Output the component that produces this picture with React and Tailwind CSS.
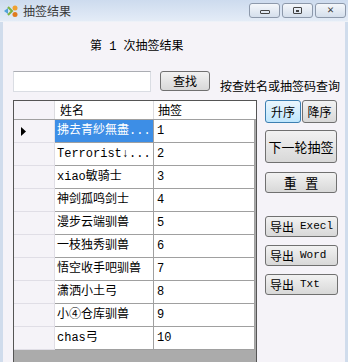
import React from 'react';

const rows = [
  { name: '拂去青紗無盡...', no: '1' },
  { name: 'Terrorist↓...', no: '2' },
  { name: 'xiao敏骑士', no: '3' },
  { name: '神剑孤鸣剑士', no: '4' },
  { name: '漫步云端驯兽', no: '5' },
  { name: '一枝独秀驯兽', no: '6' },
  { name: '悟空收手吧驯兽', no: '7' },
  { name: '潇洒小土弓', no: '8' },
  { name: '小④仓库驯兽', no: '9' },
  { name: 'chas弓', no: '10' },
];

const font = { fontFamily: '"Liberation Mono", "Noto Sans CJK SC", monospace' };

function WinButton({ children }) {
  return (
    <div className="w-[31px] h-[15px] rounded-[3px] border border-[#8d99ab] bg-gradient-to-b from-[#f4f7fb] to-[#d5dfec] flex items-center justify-center">
      {children}
    </div>
  );
}

function Button({ children, className = '', focused = false }) {
  return (
    <div
      className={
        'flex items-center whitespace-nowrap rounded-[3px] border text-[12px] text-black ' +
        (focused
          ? 'border-[#3c7fb1] bg-gradient-to-b from-[#eaf6fd] to-[#bee6fd] '
          : 'border-[#707070] bg-gradient-to-b from-[#f2f2f2] to-[#d8d8d8] ') +
        className
      }
    >
      {children}
    </div>
  );
}

function ExportButton({ label, className }) {
  return (
    <Button className={'w-[73px] h-[21px] pl-[4px] ' + className}>
      <span>导出</span>
      <span className="ml-[6px] text-[11px]" style={font}>{label}</span>
    </Button>
  );
}

export default function App() {
  return (
    <div
      className="w-[348px] h-[362px] overflow-hidden flex flex-col bg-[#f5f3f8]"
      style={{ fontFamily: '"Noto Sans CJK SC", sans-serif' }}
    >
      {/* title bar */}
      <div className="h-[22px] shrink-0 flex items-center bg-gradient-to-b from-[#cddbee] to-[#e4ecf7] border-b border-[#eef2f8]">
        <svg width="16" height="14" viewBox="0 0 16 14" className="ml-[3px]">
          <path d="M1 7 L5 4 L5 10 Z" fill="#4fa3d9" />
          <path d="M5 3 L9 7 L5 11" stroke="#7cb342" strokeWidth="2" fill="none" />
          <circle cx="12" cy="4" r="2.5" fill="#f0a030" />
          <circle cx="12" cy="10.5" r="2.5" fill="#e07b1e" />
        </svg>
        <span className="ml-[4px] text-[12px] text-[#3a3a3a] leading-none">抽签结果</span>
        <div className="ml-auto mr-[2px] flex gap-[2px] self-start mt-[3px]">
          <WinButton>
            <div className="w-[10px] h-[4px] border border-[#444] rounded-[1px] mt-[3px]" />
          </WinButton>
          <WinButton>
            <div className="w-[9px] h-[7px] border border-[#444] rounded-[1px] flex items-center justify-center">
              <div className="w-[3px] h-[2px] bg-[#444]" />
            </div>
          </WinButton>
          <WinButton>
            <span className="text-[11px] leading-none text-[#444]" style={font}>✕</span>
          </WinButton>
        </div>
      </div>

      {/* body */}
      <div className="flex-1 flex border-l-[3px] border-r-[3px] border-[#d0dcec]">
        <div className="flex-1 flex flex-col pl-[10px]">
          <div className="mt-[18px] pl-[77px] text-[12px] leading-[14px] text-black" style={font}>
            第 1 次抽签结果
          </div>

          <div className="mt-[17px] flex items-start">
            <div className="w-[138px] h-[21px] bg-white border border-[#dadde3] border-t-[#abadb3]" />
            <Button className="ml-[9px] w-[50px] h-[20px] justify-center">查找</Button>
            <span className="ml-[10px] mt-[8px] text-[12px] leading-[14px] text-black whitespace-nowrap">
              按查姓名或抽签码查询
            </span>
          </div>

          <div className="mt-[7px] flex flex-1 items-start">
            {/* grid */}
            <div className="w-[244px] h-[280px] shrink-0 border border-[#555] bg-[#ababab] flex flex-col">
              <div className="h-[19px] flex bg-white border-b border-[#a0a0a0]">
                <div className="w-[41px] bg-[#f5f3f8] border-r border-[#dcdce0]" />
                <div className="w-[99px] border-r border-[#dcdce0] pl-[5px] text-[12px] leading-[18px]">姓名</div>
                <div className="w-[100px] pl-[4px] text-[12px] leading-[18px]">抽签</div>
              </div>
              {rows.map((r, i) => (
                <div key={r.no} className="h-[23px] flex text-[12px] text-black" style={font}>
                  <div className="w-[41px] bg-[#f5f3f8] border-r border-b border-[#e0dee6] flex items-center pl-[7px]">
                    {i === 0 && (
                      <svg width="5" height="9" viewBox="0 0 5 9">
                        <path d="M0 0 L5 4.5 L0 9 Z" fill="#000" />
                      </svg>
                    )}
                  </div>
                  <div
                    className={
                      'w-[99px] border-r border-b border-[#a0a0a0] flex items-center pl-[2px] whitespace-nowrap overflow-hidden ' +
                      (i === 0 ? 'bg-[#3d8ee6] text-white' : 'bg-white')
                    }
                  >
                    {r.name}
                  </div>
                  <div className="w-[101px] bg-white border-r border-b border-[#a0a0a0] flex items-center pl-[3px]">
                    {r.no}
                  </div>
                </div>
              ))}
            </div>

            {/* right buttons */}
            <div className="ml-[8px] w-[73px] flex flex-col">
              <div className="flex gap-[1px]">
                <Button focused className="w-[36px] h-[23px] justify-center">升序</Button>
                <Button className="w-[35px] h-[23px] justify-center">降序</Button>
              </div>
              <Button className="mt-[7px] w-[72px] h-[33px] text-[13px] justify-center">下一轮抽签</Button>
              <Button className="mt-[9px] w-[72px] h-[21px] text-[13px] justify-center">重&nbsp;&nbsp;&nbsp;置</Button>
              <ExportButton label="Execl" className="mt-[23px]" />
              <ExportButton label="Word" className="mt-[8px]" />
              <ExportButton label="Txt" className="mt-[8px]" />
            </div>
          </div>
        </div>
      </div>
    </div>
  );
}
